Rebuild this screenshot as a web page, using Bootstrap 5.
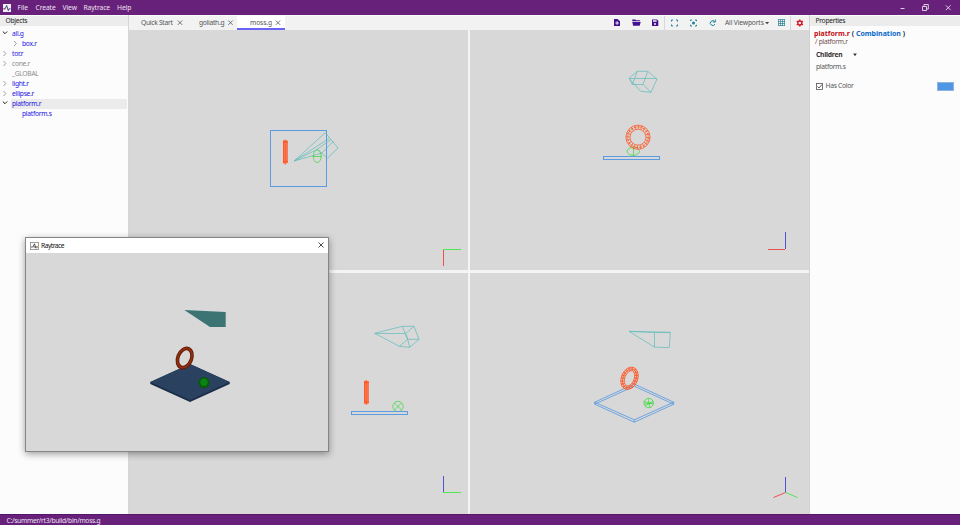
<!DOCTYPE html>
<html lang="en">
<head>
<meta charset="utf-8">
<title>moss.g</title>
<link href="https://cdn.jsdelivr.net/npm/bootstrap@5.3.0/dist/css/bootstrap.min.css" rel="stylesheet">
<style>
body{font:6.7px/10px "Noto Sans",sans-serif;letter-spacing:-.28px;color:#555;background:#fcfcfc;width:960px;height:525px}
svg{display:block;flex:none}
.titlebar{height:15px;background:#68217a;color:#eee1f2;letter-spacing:-.08px}
.app-logo{margin-left:3px}
.menu-list{padding-left:6.5px}
.menu-item{line-height:15px}
.w-file{width:18px}.w-create{width:27px}.w-view{width:21px}.w-ray{width:33.5px}
.side-left{width:128px;background:#fcfcfc}
.side-right{width:150px;background:#fcfcfc}
.panel-title{height:10px;background:#ececec;color:#222;line-height:10px;margin-top:1px;padding-left:5.5px}
.tree{padding-top:3px}
.tree-row{height:10px;line-height:10px;color:#1a12e6}
.tree-row .twist{width:11px;padding-left:2px}
.tree-row .tree-name{padding-left:1px;flex:1;margin-right:1px}
.tree-row.child{padding-left:10px}
.tree-row.dim{color:#8c8c8c}
.tree-row.picked .tree-name{background:#ebebeb}
.center-area{width:682px;border-left:1px solid #d6d6d6;border-right:1px solid #d2d2d2}
.tabs{height:15px;background:#f2f2f2;border-top:1px solid #fafafa}
.doc-tab{height:14px;line-height:13px;padding-left:12px}
.doc-tab.t1{width:58px}.doc-tab.t2{width:50px}
.doc-tab.t3{width:48px;padding-left:13px;background:#fff;border-bottom:2px solid #6a63f5;letter-spacing:-.1px}
.tools{height:14px}
.tool-sep{width:1px;height:14px;background:#d8d8d8}
.tool-sep.last{margin-left:3px}
.vp-choice{line-height:14px;padding-left:1px;width:39px;white-space:nowrap;letter-spacing:-.15px}
.views{display:grid;grid-template-columns:339px 339px;grid-template-rows:240px 241px;gap:3px 2px;background:#f4f4f4;height:484px}
.view{background:#d8d8d8;overflow:hidden}
.statusbar{height:11px;background:#68217a;color:#eee1f2;line-height:12px;padding-left:6.5px;border-top:1px solid #56146a}
.props{padding:2.5px 6px 0 4px}
.obj-name{font-size:7px;font-weight:700;color:#333;line-height:9px;letter-spacing:0}
.obj-name .comb{color:#c40e16}.obj-name .kind{color:#0868c8}
.obj-path{line-height:8px;padding-left:1px;color:#714f4f}
.kids-head{color:#333;padding:4.5px 0 0 2px;letter-spacing:-.2px}
.kid{padding:2px 0 0 2px}
.color-row{padding:9px 0 0 2px}
.check-text{padding-left:2.5px}
.swatch{width:17px;height:9px;background:#4f96e6;border:1px solid #8fb4de}
.ray{left:25px;top:237px;width:304px;height:215px;background:#d8d8d8;border:1px solid #858585;box-shadow:0 2px 7px rgba(0,0,0,.38)}
.ray-title{height:15px;background:#fff;color:#111;letter-spacing:-.5px;padding-left:3.5px}
.ray-name{padding-left:2.5px}
.wire{fill:none;stroke-width:.7}
.crisp{stroke-width:1}
.cone{stroke:#5fbaba}.plat{stroke:#5a9be2}.ring{stroke:#ff4713}.ball{stroke:#35da35}
.tight{stroke-width:.85}
.chev{fill:none;stroke:#888;stroke-width:.8}
.chev.open{stroke:#222;stroke-width:1}
.shut{stroke:#555;stroke-width:.8}
.ax{fill:none;stroke-width:1}
.ar{stroke:#ed5050}.ag{stroke:#50e850}.ab{stroke:#5252d8}
</style>
<script src="https://cdn.jsdelivr.net/npm/bootstrap@5.3.0/dist/js/bootstrap.bundle.min.js"></script>
</head>
<body class="overflow-hidden d-flex flex-column position-relative">
<header class="titlebar d-flex align-items-center">
  <svg class="app-logo" width="8" height="8" viewBox="0 0 8 8"><rect width="8" height="8" fill="#f4eff7"/><path d="M.5 4.800H2L3.700 1.500 5.300 6.600 6 4.800H7.500" fill="none" stroke="#26357c" stroke-width=".9"/><path d="M.5 4.800H2.500" stroke="#d3403c" stroke-width=".9"/></svg>
  <nav class="menu-list d-flex">
    <span class="menu-item w-file">File</span><span class="menu-item w-create">Create</span><span class="menu-item w-view">View</span><span class="menu-item w-ray">Raytrace</span><span class="menu-item">Help</span>
  </nav>
  <svg class="ms-auto" width="60" height="15" fill="none" stroke="#e9dcee" stroke-width=".9"><path d="M.5 8.500H4.500M45.800 5.300l4.800 4.800m0-4.800l-4.800 4.800"/><path d="M22.500 6.500h4v4h-4zM24 6V4.500h4.300V9H27"/></svg>
</header>
<main class="d-flex flex-grow-1">
  <aside class="side-left">
    <div class="panel-title">Objects</div>
    <div class="tree">
      <div class="tree-row d-flex"><span class="twist"><svg width="6" height="8"><path class="chev open" d="M.8 2.500L3 4.700 5.200 2.500"/></svg></span><span class="tree-name">all.g</span></div>
      <div class="tree-row child d-flex"><span class="twist"><svg width="6" height="9"><path class="chev" d="M2 2L4.300 4.500 2 7"/></svg></span><span class="tree-name">box.r</span></div>
      <div class="tree-row d-flex"><span class="twist"><svg width="6" height="9"><path class="chev" d="M1.500 2L3.800 4.500 1.500 7"/></svg></span><span class="tree-name">tor.r</span></div>
      <div class="tree-row dim d-flex"><span class="twist"><svg width="6" height="9"><path class="chev" d="M1.500 2L3.800 4.500 1.500 7"/></svg></span><span class="tree-name">cone.r</span></div>
      <div class="tree-row dim d-flex"><span class="twist"></span><span class="tree-name">_GLOBAL</span></div>
      <div class="tree-row d-flex"><span class="twist"><svg width="6" height="9"><path class="chev" d="M1.500 2L3.800 4.500 1.500 7"/></svg></span><span class="tree-name">light.r</span></div>
      <div class="tree-row d-flex"><span class="twist"><svg width="6" height="9"><path class="chev" d="M1.500 2L3.800 4.500 1.500 7"/></svg></span><span class="tree-name">ellipse.r</span></div>
      <div class="tree-row picked d-flex"><span class="twist"><svg width="6" height="8"><path class="chev open" d="M.8 2.500L3 4.700 5.200 2.500"/></svg></span><span class="tree-name">platform.r</span></div>
      <div class="tree-row child d-flex"><span class="twist"></span><span class="tree-name">platform.s</span></div>
    </div>
  </aside>
  <section class="center-area">
    <div class="tabs d-flex">
      <div class="doc-tab t1 d-flex">Quick Start<svg class="ms-auto" width="11" height="12"><path class="shut" d="M1.800 4.500l4.400 4.400m0-4.400L1.800 8.900"/></svg></div>
      <div class="doc-tab t2 d-flex">goliath.g<svg class="ms-auto" width="10" height="12"><path class="shut" d="M1.300 4.500l4.400 4.400m0-4.400L1.300 8.900"/></svg></div>
      <div class="doc-tab t3 d-flex">moss.g<svg class="ms-auto" width="11" height="12"><path class="shut" d="M1.800 4.500l4.400 4.400m0-4.400L1.800 8.900"/></svg></div>
      <div class="tools d-flex ms-auto">
        <svg width="54" height="14"><g fill="#45128f"><path fill-rule="evenodd" d="M4 3h3.500L10 5.300V10H4zM6.600 5.300v1.200H5.400v1h1.200v1.200h1V7.500h1.200v-1H7.600V5.300z"/><path d="M22.300 3.500h3l.8.8h4v1h-7.800zM22.300 6h8.400l-1 3.700h-6.600z"/><path fill-rule="evenodd" d="M42 3.500h5L48.300 4.800V10H42zM43 4.300v1.500h3.600V4.300zM45 7a1 1 0 100 2 1 1 0 000-2z"/></g></svg>
        <span class="tool-sep"></span>
        <svg width="59" height="14" fill="none" stroke="#1d8396"><path d="M6.500 5.500V4h1.500M11 4h1.500v1.500M12.500 8.500V10H11M8 10H6.500V8.500M25.500 5V4H27M30 4h1.500v1.200M31.500 8.800V10H30M27 10h-1.500V8.800"/><circle cx="28.500" cy="7" r="1.500" fill="#1d8396" stroke="none"/><path d="M49.700 5.700A2.400 2.400 0 1 0 50 8M50.300 3.500V6H47.800" stroke-width="1"/></svg>
        <span class="vp-choice">All Viewports</span>
        <svg width="24" height="14"><path d="M2 6h4.200L4.100 8.200z" fill="#444"/><path d="M15 3.500h7M15 5.500h7M15 7.500h7M15 9.500h7M15.500 3.500v6.500M17.500 3.500v6.500M19.500 3.500v6.500M21.500 3.500v6.500" fill="none" stroke="#2a8295" stroke-width=".7"/></svg>
        <span class="tool-sep last"></span>
        <svg width="18" height="14"><circle cx="8.800" cy="7" r="2" fill="none" stroke="#d3111f" stroke-width="1.300"/><path d="M8.800 3.600v1.200m0 4.400v1.200M5.800 5.200l1 .6m4 2.400l1 .6M5.800 8.800l1-.6m4-2.400l1-.6" stroke="#d3111f" stroke-width="1.400"/></svg>
      </div>
    </div>
    <div class="views">
      <svg class="view" width="339" height="240" viewBox="129 30 339 240">
        <rect class="wire plat crisp" x="270.500" y="130.500" width="56" height="56"/>
        <rect x="283" y="140" width="4.500" height="24" rx="2" fill="#f9845c"/><path class="wire ring" d="M283.500 140.500V163M285.200 139.500V164.500M287.200 140.500V163M283 142h5M283 161.500h5"/>
        <path class="wire cone" d="M294 161L325.300 132.700 338 148 327.300 158.300 317.300 149.300zM294 161L329 138.500M294 161l28-8 11.500-12M317.300 149.300L331 139.500"/>
        <ellipse class="wire ball" cx="317.200" cy="156.300" rx="3.900" ry="6.300"/><path class="wire ball" d="M312.500 156.500h9.500"/>
        <path class="ax ag" d="M443 249.500h18"/><path class="ax ar" d="M443.500 250v16"/>
      </svg>
      <svg class="view" width="339" height="240" viewBox="470 30 339 240">
        <path class="wire cone" d="M629 78.300L637.300 71.300H647.700L657 79 651 92.300 640.700 91.300zM629 78.500h28M637.300 71.300L632.300 84.500H643L647.700 71.300M643 84.300l8 8M632.300 84.500l-2.500-5"/>
        <path class="wire ball" d="M633.500 147v9.500"/><ellipse class="wire ball" cx="633.300" cy="151.300" rx="6.300" ry="4"/>
        <circle cx="638" cy="137.200" r="10" fill="none" stroke="#f77c53" stroke-width="3.600" stroke-dasharray="1.100 2"/><g class="wire ring"><circle cx="638" cy="137.200" r="12.100"/><circle cx="638" cy="137.200" r="10.300" stroke-dasharray="3 1"/><circle cx="638" cy="137.200" r="8"/></g>
        <rect class="wire plat crisp" x="603.500" y="156.500" width="56" height="3"/>
        <path class="ax ar" d="M768 249.500h17"/><path class="ax ab" d="M785.500 232v17"/>
      </svg>
      <svg class="view" width="339" height="241" viewBox="129 273 339 241">
        <path class="wire cone" d="M374.700 333.300L402.300 326.300H414L419 339.300 409.700 347.300 399.300 346.300zM374.700 333.500h31L414 326.300M402.300 326.300l5.400 13H419M405.700 333.700l2 5.600-8.400 7M407.700 339.300l2 8"/>
        <rect x="364" y="380.500" width="4.500" height="24" rx="2" fill="#f9845c"/><path class="wire ring" d="M364.500 381v22.500M366.200 380v24.500M368.200 381v22.500M364 382.500h5M364 402h5"/>
        <circle class="wire ball" cx="398" cy="406.500" r="5.200"/><path class="wire ball" d="M394.500 403l7 7m0-7l-7 7"/>
        <rect class="wire plat crisp" x="351.500" y="411.500" width="56" height="3"/>
        <path class="ax ab" d="M443.500 476v16.500"/><path class="ax ag" d="M443 492.500h18"/>
      </svg>
      <svg class="view" width="339" height="241" viewBox="470 273 339 241">
        <path class="wire cone" d="M629 331.300L654.300 347 669.300 347.700 670.300 332.300zM654.500 347V332.500H670M629 331.500l25.500 1"/>
        <path class="wire plat tight" d="M594.700 402.200L634.300 384 673.700 402.200 634.300 419.800zM594.700 404.200L634.300 386.200 673.700 404.200 634.300 422.200zM594.700 402v2.300M673.700 402v2.300M634.300 419.800v2.400"/>
        <g transform="rotate(22 629.500 378.300)"><ellipse cx="629.500" cy="378.300" rx="6.400" ry="9.800" fill="none" stroke="#f77c53" stroke-width="3.500" stroke-dasharray="1.400 1.400"/><g class="wire ring"><ellipse cx="629.500" cy="378.300" rx="8.200" ry="11.600"/><ellipse cx="629.500" cy="378.300" rx="6.500" ry="9.800"/><ellipse cx="629.500" cy="378.300" rx="4.700" ry="8"/></g></g>
        <circle class="wire ball" cx="648.700" cy="403" r="4.700"/><path class="wire ball" d="M643.500 401.500l10 2.500M645 406l8-5M648 398l2 10M644 404l9-1"/>
        <path class="ax ab" d="M785.500 477v15.500"/><path class="ax ar" d="M785.500 492.500l-12 5"/><path class="ax ag" d="M785.500 492.500l12 5"/>
      </svg>
    </div>
  </section>
  <aside class="side-right">
    <div class="panel-title">Properties</div>
    <div class="props">
      <div class="obj-name"><span class="comb">platform.r</span> ( <span class="kind">Combination</span> )</div>
      <div class="obj-path">/ platform.r</div>
      <div class="kids-head d-flex fw-bold">Children<svg width="16" height="10" class="ms-2"><path d="M3.200 3.500h3.600L5 6.200z" fill="#333"/></svg></div>
      <div class="kid">platform.s</div>
      <div class="color-row d-flex align-items-center"><svg width="7" height="7"><rect x=".5" y=".5" width="6" height="6" fill="#fff" stroke="#555" stroke-width=".8"/><path d="M1.500 3.500L3 5l3-3.500" fill="none" stroke="#333" stroke-width=".8"/></svg><span class="check-text">Has Color</span><span class="swatch ms-auto"></span></div>
    </div>
  </aside>
</main>
<footer class="statusbar">C:/summer/rt3/build/bin/moss.g</footer>
<div class="ray position-absolute">
  <div class="ray-title d-flex align-items-center"><svg width="9" height="8"><rect x=".4" y=".4" width="8" height="7.200" fill="#fff" stroke="#888" stroke-width=".8"/><path d="M1 5H2.800L4.500 1.800 6 6.500M3.500 5h4.500" fill="none" stroke="#333" stroke-width=".8"/></svg><span class="ray-name">Raytrace</span><svg class="ms-auto" width="12" height="15"><path d="M2.500 4.500l5 5m0-5l-5 5" stroke="#222" stroke-width=".8"/></svg></div>
  <svg width="302" height="198" viewBox="26 253 302 198">
    <path d="M184.300 310L225.700 312V327H210z" fill="#3c7474"/>
    <path d="M150.300 382L190 364l39.700 18v2L190 402l-39.700-18z" fill="#1b2e48"/><path d="M150.300 382L190 364l39.700 18L190 400z" fill="#2b4160"/>
    <g fill="none" transform="rotate(22 184.700 358)"><ellipse cx="184.700" cy="358" rx="6.800" ry="10" stroke="#651b08" stroke-width="3.600"/><ellipse cx="184.700" cy="358" rx="6.800" ry="10" stroke="#92300f" stroke-width="1.700"/></g>
    <circle cx="204" cy="382.600" r="5.600" fill="#075a0c"/><circle cx="204" cy="382.200" r="3.700" fill="#0b8310"/>
  </svg>
</div>
</body>
</html>
